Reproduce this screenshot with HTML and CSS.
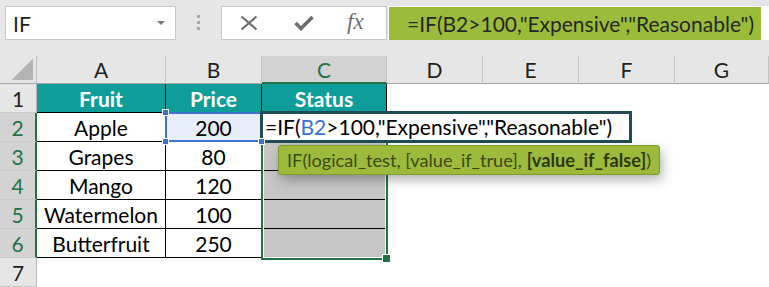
FILE: index.html
```html
<!DOCTYPE html>
<html>
<head>
<meta charset="utf-8">
<link rel="stylesheet" href="styles.css">
</head>
<body>
<div class="app">
  <div class="fbar">
    <div class="namebox"><span class="name">IF</span><span class="caret"></span></div>
    <div class="grip"><i></i><i></i><i></i></div>
    <div class="fxbox">
      <svg class="ic-x" width="18" height="16" viewBox="0 0 18 16"><path d="M1.5 1.5 L16.5 14.5 M16.5 1.5 L1.5 14.5" stroke="#707070" stroke-width="2.2" fill="none"/></svg>
      <svg class="ic-ok" width="20" height="16" viewBox="0 0 20 16"><path d="M1.5 8 L7 13.5 L18.5 2" stroke="#6e6e6e" stroke-width="3.6" fill="none"/></svg>
      <span class="fx">fx</span>
    </div>
    <div class="formula"><span class="hl">=IF(B2&gt;100,"Expensive","Reasonable")</span></div>
  </div>
  <div class="sheet">
    <div class="corner"><span class="tri"></span></div>
    <div class="ch">A</div><div class="ch">B</div><div class="ch sel">C</div><div class="ch">D</div><div class="ch">E</div><div class="ch">F</div><div class="ch">G</div>

    <div class="rh">1</div>
    <div class="c hd">Fruit</div><div class="c hd">Price</div><div class="c hd">Status</div>
    <div class="e"></div><div class="e"></div><div class="e"></div><div class="e"></div>

    <div class="rh sel">2</div>
    <div class="c">Apple</div><div class="c bsel">200<i class="h tl"></i><i class="h bl"></i><i class="h br"></i></div><div class="c"></div>
    <div class="e"></div><div class="e"></div><div class="e"></div><div class="e"></div>

    <div class="rh sel">3</div>
    <div class="c">Grapes</div><div class="c">80</div><div class="c gray"></div>
    <div class="e"></div><div class="e"></div><div class="e"></div><div class="e"></div>

    <div class="rh sel">4</div>
    <div class="c">Mango</div><div class="c">120</div><div class="c gray"></div>
    <div class="e"></div><div class="e"></div><div class="e"></div><div class="e"></div>

    <div class="rh sel">5</div>
    <div class="c">Watermelon</div><div class="c">100</div><div class="c gray"></div>
    <div class="e"></div><div class="e"></div><div class="e"></div><div class="e"></div>

    <div class="rh sel">6</div>
    <div class="c">Butterfruit</div><div class="c">250</div><div class="c gray"></div>
    <div class="e"></div><div class="e"></div><div class="e"></div><div class="e"></div>

    <div class="rh">7</div>
    <div class="e"></div><div class="e"></div><div class="e"></div><div class="e"></div><div class="e"></div><div class="e"></div><div class="e"></div>
  </div>
  <div class="csel"><i class="fh"></i></div>
  <div class="editor">=IF(<span class="ref">B2</span>&gt;100,"Expensive","Reasonable")</div>
  <div class="tip">IF(logical_test, [value_if_true], <b>[value_if_false]</b>)</div>
</div>
</body>
</html>
```

FILE: styles.css
```css
body {
  margin: 0;
  background: #fff;
  font-family: Lato, "Liberation Sans", sans-serif;
}
.app {
  position: relative;
  width: 769px;
  height: 287px;
  overflow: hidden;
}
.fbar {
  height: 56px;
  box-sizing: border-box;
  padding-top: 6px;
  background: #e6e6e6;
  display: flex;
  align-items: flex-start;
}
.namebox {
  margin-left: 5px;
  width: 171px;
  height: 34px;
  box-sizing: border-box;
  border: 1px solid #c6c6c6;
  background: #fff;
  display: flex;
  align-items: center;
  padding: 0 10px 0 7px;
  font-size: 21px;
  color: #222;
}
.namebox .name { flex: 1; }
.caret {
  width: 0;
  height: 0;
  border-left: 4px solid transparent;
  border-right: 4px solid transparent;
  border-top: 4px solid #7a7a7a;
}
.grip {
  width: 45px;
  display: flex;
  flex-direction: column;
  align-items: center;
  gap: 3px;
  padding-top: 9px;
}
.grip i {
  display: block;
  width: 3px;
  height: 3px;
  background: #a8a8a8;
}
.fxbox {
  width: 166px;
  height: 34px;
  box-sizing: border-box;
  border: 1px solid #c6c6c6;
  background: #fff;
  display: flex;
  align-items: center;
  padding-left: 18px;
}
.ic-x { margin-right: 36px; }
.ic-ok { margin-right: 33px; }
.fx {
  font-family: "Liberation Serif", serif;
  font-style: italic;
  font-size: 23px;
  color: #6e6e6e;
  margin-top: -3px;
}
.formula {
  flex: 1;
  height: 34px;
  margin-left: 1px;
  box-sizing: border-box;
  padding: 1px 0 0 1px;
  background: #fff;
}
.hl {
  display: block;
  width: 372px;
  height: 33px;
  line-height: 33px;
  box-sizing: border-box;
  padding-left: 18px;
  background: #9bbc3b;
  color: #262626;
  font-size: 21px;
  white-space: nowrap;
}
.sheet {
  display: grid;
  grid-template-columns: 37px 129px 96px 125px 96px 96px 96px 1fr;
  grid-template-rows: 28px repeat(7, 29px);
}
.sheet > div {
  box-sizing: border-box;
}
.corner {
  background: #e6e6e6;
  border-right: 1px solid #c0c0c0;
  border-bottom: 1px solid #a8a8a8;
  display: flex;
  align-items: flex-end;
  justify-content: flex-end;
  padding: 0 3px 3px 0;
}
.tri {
  width: 21px;
  height: 21px;
  background: linear-gradient(to bottom right, transparent 50%, #b4b4b4 50%);
}
.ch {
  background: #e6e6e6;
  border-right: 1px solid #c4c4c4;
  border-bottom: 1px solid #a8a8a8;
  display: flex;
  align-items: center;
  justify-content: center;
  font-size: 21px;
  color: #1e1e1e;
}
.ch.sel {
  background: #d2d2d2;
  color: #217346;
  border-bottom: 2px solid #217346;
}
.rh {
  background: #e6e6e6;
  border-right: 1px solid #b8b8b8;
  border-bottom: 1px solid #cacaca;
  display: flex;
  align-items: center;
  justify-content: center;
  font-size: 21px;
  color: #1e1e1e;
}
.rh.sel {
  background: #d3d3d3;
  color: #217346;
  border-right: 2px solid #217346;
}
.c {
  position: relative;
  border-right: 1px solid #000;
  border-bottom: 1px solid #000;
  display: flex;
  align-items: center;
  justify-content: center;
  font-size: 21px;
  color: #000;
}
.hd {
  background: #0f9d99;
  color: #fff;
  font-weight: bold;
}
.gray { background: #c6c6c6; }
.bsel {
  background: #e8eef9;
}
.bsel::after {
  content: "";
  position: absolute;
  left: -1px;
  top: -1px;
  right: -1px;
  bottom: -1px;
  border: 2px solid #3c73d0;
}
.h {
  position: absolute;
  z-index: 1;
  width: 5px;
  height: 5px;
  background: #3c73d0;
  border: 1px solid #fff;
}
.h.tl { left: -4px; top: -4px; }
.h.bl { left: -4px; bottom: -4px; }
.h.br { right: -4px; bottom: -4px; }
.csel {
  position: absolute;
  left: 261px;
  top: 112px;
  width: 127px;
  height: 148px;
  box-sizing: border-box;
  border: 2px solid #217346;
  box-shadow: inset 0 0 0 1px #fff;
}
.fh {
  position: absolute;
  right: -5px;
  bottom: -5px;
  width: 7px;
  height: 7px;
  background: #217346;
  border: 1px solid #fff;
}
.editor {
  position: absolute;
  left: 260px;
  top: 111px;
  width: 372px;
  height: 32px;
  box-sizing: border-box;
  border: 3px solid #1e4e53;
  background: #fff;
  line-height: 26px;
  padding-left: 2px;
  font-size: 21px;
  color: #000;
  white-space: nowrap;
}
.ref { color: #3a6fd0; }
.tip {
  position: absolute;
  left: 278px;
  top: 145px;
  width: 382px;
  height: 30px;
  box-sizing: border-box;
  background: #9cbb3c;
  border: 1px solid #7d9c2a;
  border-radius: 3px;
  box-shadow: 2px 5px 12px rgba(0, 0, 0, 0.3);
  line-height: 28px;
  padding-left: 8px;
  font-size: 18.2px;
  color: #3d4a14;
  white-space: nowrap;
}
.tip b { color: #2e3810; }
```
